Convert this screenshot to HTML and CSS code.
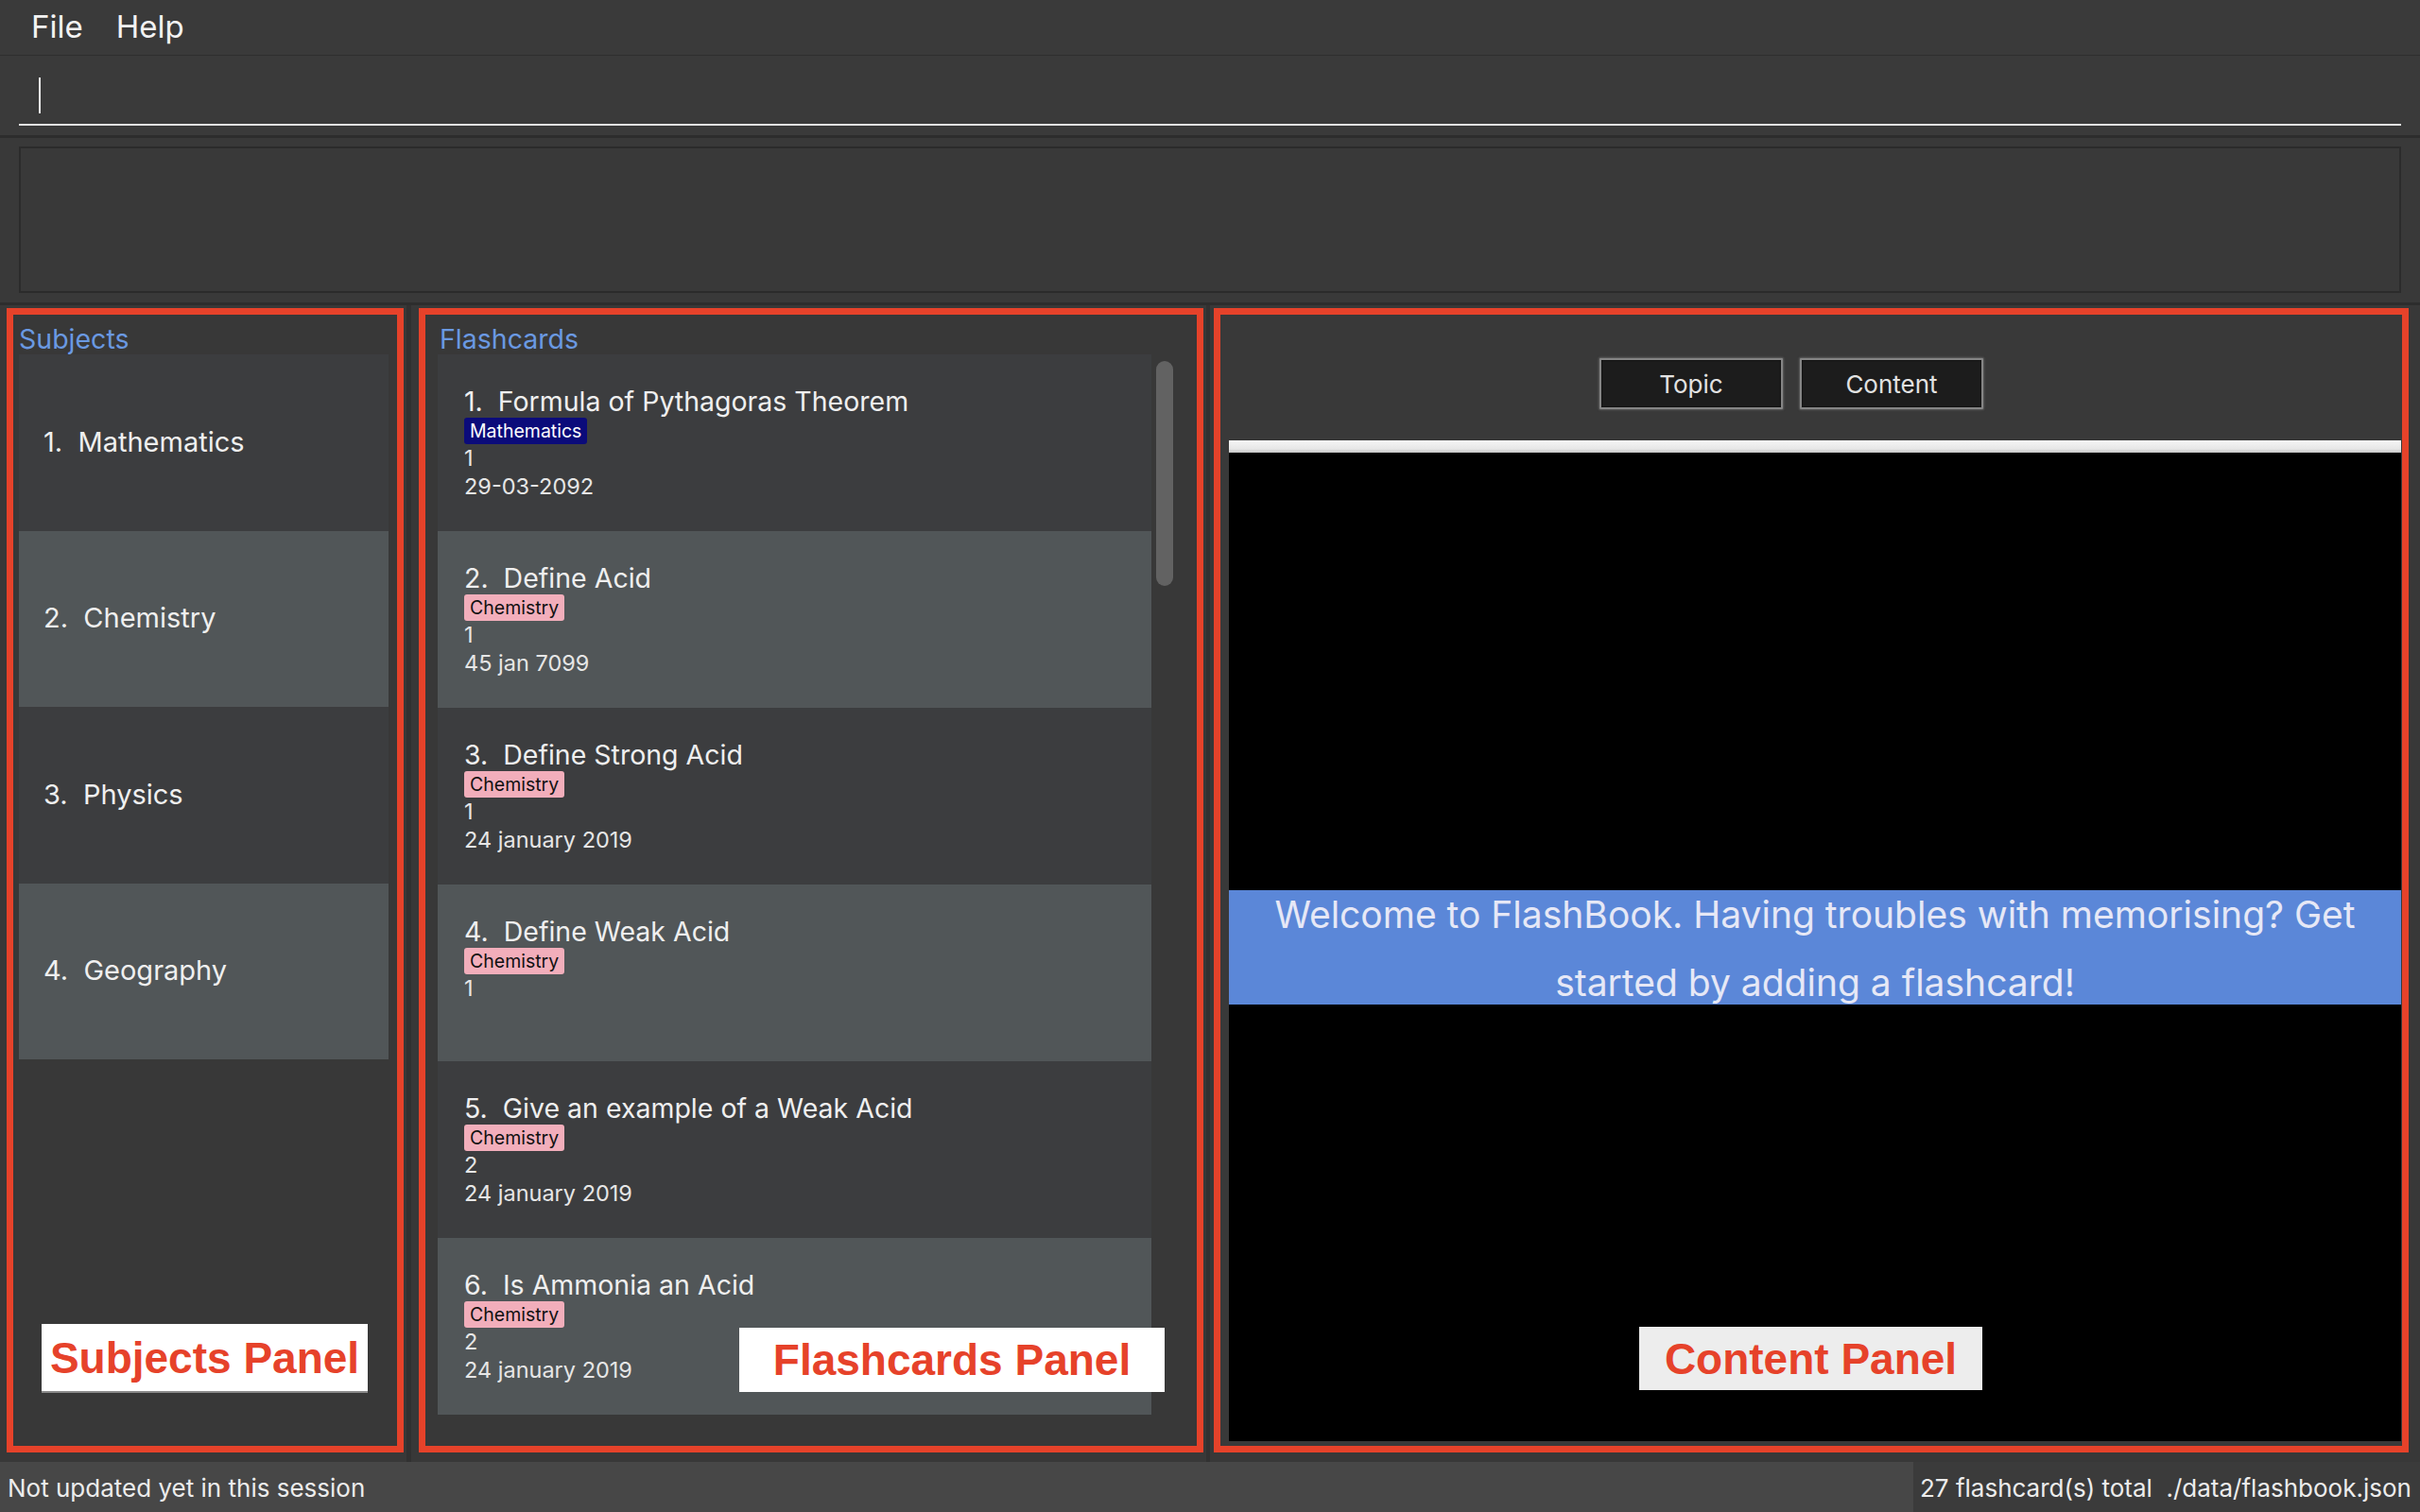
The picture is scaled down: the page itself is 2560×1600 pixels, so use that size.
FILE: index.html
```html
<!DOCTYPE html>
<html lang="en">
<head>
<meta charset="utf-8">
<title>FlashBook</title>
<link rel="stylesheet" href="styles.css">
</head>
<body>
<div class="app">
  <div class="menubar">
    <span class="menu-item">File</span>
    <span class="menu-item">Help</span>
  </div>
  <div class="command">
    <div class="cmd-field"><span class="caret"></span></div>
  </div>
  <div class="result">
    <div class="result-box"></div>
  </div>
  <div class="panes">
    <section class="pane subjects">
      <div class="pane-label">Subjects</div>
      <div class="subject-list">
        <div class="subject-cell">1.&nbsp;&nbsp;Mathematics</div>
        <div class="subject-cell alt">2.&nbsp;&nbsp;Chemistry</div>
        <div class="subject-cell">3.&nbsp;&nbsp;Physics</div>
        <div class="subject-cell alt">4.&nbsp;&nbsp;Geography</div>
      </div>
      <div class="annot annot-subjects">Subjects Panel</div>
    </section>
    <div class="divider div-a"></div>
    <section class="pane flashcards">
      <div class="pane-label">Flashcards</div>
      <div class="fc-body">
        <div class="fc-list">
          <div class="fc-cell">
            <div class="fc-title">1.&nbsp;&nbsp;Formula of Pythagoras Theorem</div>
            <div class="tags"><span class="tag math">Mathematics</span></div>
            <div class="fc-line">1</div>
            <div class="fc-line">29-03-2092</div>
          </div>
          <div class="fc-cell alt">
            <div class="fc-title">2.&nbsp;&nbsp;Define Acid</div>
            <div class="tags"><span class="tag chem">Chemistry</span></div>
            <div class="fc-line">1</div>
            <div class="fc-line">45 jan 7099</div>
          </div>
          <div class="fc-cell">
            <div class="fc-title">3.&nbsp;&nbsp;Define Strong Acid</div>
            <div class="tags"><span class="tag chem">Chemistry</span></div>
            <div class="fc-line">1</div>
            <div class="fc-line">24 january 2019</div>
          </div>
          <div class="fc-cell alt">
            <div class="fc-title">4.&nbsp;&nbsp;Define Weak Acid</div>
            <div class="tags"><span class="tag chem">Chemistry</span></div>
            <div class="fc-line">1</div>
          </div>
          <div class="fc-cell">
            <div class="fc-title">5.&nbsp;&nbsp;Give an example of a Weak Acid</div>
            <div class="tags"><span class="tag chem">Chemistry</span></div>
            <div class="fc-line">2</div>
            <div class="fc-line">24 january 2019</div>
          </div>
          <div class="fc-cell alt">
            <div class="fc-title">6.&nbsp;&nbsp;Is Ammonia an Acid</div>
            <div class="tags"><span class="tag chem">Chemistry</span></div>
            <div class="fc-line">2</div>
            <div class="fc-line">24 january 2019</div>
          </div>
        </div>
        <div class="scroll-track"><div class="scroll-thumb"></div></div>
      </div>
      <div class="annot annot-flash">Flashcards Panel</div>
    </section>
    <div class="divider div-b"></div>
    <section class="pane content">
      <div class="btn-row">
        <button class="tab-btn">Topic</button>
        <button class="tab-btn">Content</button>
      </div>
      <div class="web-top"></div>
      <div class="web-view">
        <div class="welcome"><div class="welcome-text">Welcome to FlashBook. Having troubles with memorising? Get<br>started by adding a flashcard!</div></div>
      </div>
      <div class="annot annot-content">Content Panel</div>
    </section>
  </div>
  <div class="statusbar">
    <div class="status-left">Not updated yet in this session</div>
    <div class="status-right">27 flashcard(s) total&nbsp;&nbsp;./data/flashbook.json</div>
  </div>
</div>
</body>
</html>
```
FILE: styles.css
```css
html, body {
  margin: 0;
  padding: 0;
}
body {
  width: 2560px;
  height: 1600px;
  overflow: hidden;
  background: #383838;
  font-family: Inter, "Open Sans", "Liberation Sans", sans-serif;
  color: #ececec;
}
.app {
  display: flex;
  flex-direction: column;
  width: 2560px;
  height: 1600px;
}
.menubar {
  height: 59px;
  box-sizing: border-box;
  border-bottom: 1px solid #2e2e2e;
  background: #3a3a3a;
  display: flex;
  align-items: center;
  padding-left: 33px;
  gap: 35px;
}
.menu-item {
  font-size: 33px;
  color: #f2f2f2;
  line-height: 1;
  margin-top: -1px;
}
.command {
  height: 87px;
  box-sizing: border-box;
  padding: 0 20px;
  background: #3a3a3a;
  border-bottom: 3px solid #2d2d2d;
}
.cmd-field {
  height: 74px;
  box-sizing: border-box;
  border-bottom: 2px solid #e2e2e2;
  padding-top: 23px;
  padding-left: 21px;
}
.caret {
  display: block;
  width: 2px;
  height: 38px;
  background: #f0f0f0;
}
.result {
  height: 177px;
  box-sizing: border-box;
  padding: 9px 20px 10px;
  background: #393939;
  border-bottom: 3px solid #2d2d2d;
}
.result-box {
  height: 155px;
  box-sizing: border-box;
  border: 2px solid #2b2b2b;
  background: #393939;
}
.panes {
  flex: 1;
  display: flex;
  align-items: flex-start;
  background: #383838;
  padding-top: 3px;
  box-sizing: border-box;
}
.pane {
  position: relative;
  box-sizing: border-box;
  height: 1211px;
  border: 7px solid #e6422a;
  background: #383838;
}
.divider {
  align-self: stretch;
  width: 5px;
  margin-top: -3px;
  background: #313131;
}
.div-a { margin-left: 3px; margin-right: 8px; }
.div-b { width: 4px; margin-left: 3px; margin-right: 4px; }
.subjects {
  margin-left: 7px;
  width: 420px;
  padding-left: 6px;
}
.flashcards {
  width: 830px;
  padding-left: 13px;
}
.content {
  width: 1264px;
  padding: 0 1px 5px 9px;
  display: flex;
  flex-direction: column;
  background: #393939;
}
.pane-label {
  height: 42px;
  box-sizing: border-box;
  padding-top: 10px;
  line-height: 32px;
  font-size: 28.5px;
  color: #6a99e2;
}
.flashcards .pane-label { padding-left: 2px; }
.subject-list {
  width: 391px;
}
.subject-cell {
  height: 186.5px;
  display: flex;
  align-items: center;
  padding-left: 26px;
  box-sizing: border-box;
  font-size: 29px;
  color: #efefef;
  background: #3c3d3f;
  padding-bottom: 2px;
}
.subject-cell.alt {
  background: #515658;
}
.fc-body {
  display: flex;
  gap: 5px;
}
.fc-list {
  width: 755px;
}
.fc-cell {
  height: 187px;
  box-sizing: border-box;
  padding: 34px 0 0 28px;
  background: #3c3d3f;
}
.fc-cell.alt {
  background: #515658;
}
.fc-title {
  font-size: 28.5px;
  line-height: 32px;
  color: #efefef;
}
.tags {
  display: flex;
  margin-top: 1px;
}
.tag {
  height: 28px;
  box-sizing: border-box;
  padding: 0 6px;
  border-radius: 3px;
  font-size: 19.5px;
  line-height: 28px;
}
.tag.math {
  background: #0b0b7a;
  color: #ffffff;
}
.tag.chem {
  background: #f2aebb;
  color: #111111;
}
.fc-line {
  font-size: 23.5px;
  line-height: 30px;
  color: #e6e6e6;
}
.scroll-track {
  width: 18px;
  padding-top: 7px;
}
.scroll-thumb {
  width: 18px;
  height: 238px;
  border-radius: 9px;
  background: #626262;
}
.btn-row {
  display: flex;
  gap: 18px;
  padding-top: 46px;
  padding-left: 392px;
  height: 54px;
}
.tab-btn {
  width: 194px;
  height: 54px;
  box-sizing: border-box;
  border: 2px solid #858585;
  box-shadow: 0 0 2px 1px #5e5e5e, inset 0 0 2px #000;
  background: #1c1c1c;
  color: #e2e2e2;
  font-family: Inter, "Open Sans", sans-serif;
  font-size: 26px;
  padding: 0;
  border-radius: 1px;
}
.web-top {
  margin-top: 33px;
  height: 13px;
  background: linear-gradient(#f6f6f6, #e6e6e6 70%, #c4c4c4);
}
.web-view {
  flex: 1;
  background: #000000;
  display: flex;
  flex-direction: column;
  justify-content: center;
}
.welcome {
  height: 121px;
  background: #5b87d8;
  text-align: center;
}
.welcome-text {
  font-size: 39px;
  line-height: 72px;
  color: #e6e8f6;
  margin-top: -10px;
}
.annot {
  position: absolute;
  box-sizing: border-box;
  display: flex;
  align-items: center;
  justify-content: center;
  font-family: "Liberation Sans", Arial, sans-serif;
  font-weight: bold;
  font-size: 46px;
  color: #e6422a;
  background: #ffffff;
  white-space: nowrap;
}
.annot-subjects {
  left: 30px;
  top: 1068px;
  width: 345px;
  height: 73px;
  border-bottom: 2px solid #8a8a8a;
}
.annot-flash {
  left: 332px;
  top: 1072px;
  width: 450px;
  height: 68px;
}
.annot-content {
  left: 443px;
  top: 1071px;
  width: 363px;
  height: 67px;
  background: #ededed;
}
.statusbar {
  height: 53px;
  display: flex;
  font-size: 26px;
  color: #ececec;
}
.status-left {
  flex: 1;
  background: #474747;
  padding-left: 8px;
  display: flex;
  align-items: center;
  padding-top: 2px;
}
.status-right {
  width: 536px;
  box-sizing: border-box;
  background: #3b3b3b;
  padding-left: 7px;
  display: flex;
  align-items: center;
  padding-top: 2px;
  white-space: nowrap;
}
```
